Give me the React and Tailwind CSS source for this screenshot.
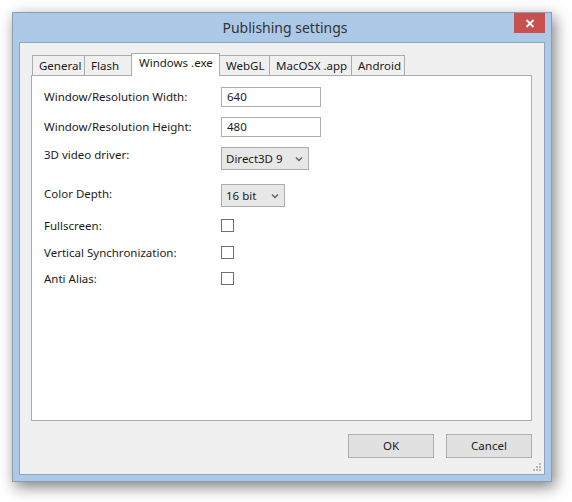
import React from "react";

const font = { fontFamily: '"Noto Sans", "Open Sans", sans-serif' };

function Chevron() {
  return (
    <svg width="8" height="6" viewBox="0 0 8 6" className="block">
      <path d="M1 1.5 L4 4.5 L7 1.5" fill="none" stroke="#606060" strokeWidth="1.4" />
    </svg>
  );
}

function Tab({ label, w, selected }) {
  if (selected) {
    return (
      <div
        className="relative z-10 -ml-px h-[23px] bg-white border border-b-0 border-[#acacac] pl-[7px] pt-[1px] text-[11.5px] leading-[16px] text-[#1a1a1a]"
        style={{ width: w }}
      >
        {label}
      </div>
    );
  }
  return (
    <div
      className="-ml-px first:ml-0 h-[21px] bg-[#f0f0f0] border border-b-0 border-[#acacac] pl-[6px] pt-[2px] text-[11.5px] leading-[16px] text-[#1a1a1a]"
      style={{ width: w }}
    >
      {label}
    </div>
  );
}

function Row({ label, children, h, mt, labelPt = 0, start }) {
  return (
    <div className={`flex ${start ? "items-start" : "items-center"}`} style={{ height: h, marginTop: mt }}>
      <div className="w-[177px] text-[11.5px] leading-[16px] text-[#1a1a1a]" style={{ paddingTop: labelPt }}>
        {label}
      </div>
      {children}
    </div>
  );
}

function TextBox({ value }) {
  return (
    <div className="w-[100px] h-[20px] bg-white border border-[#abadb3] pl-[5px] text-[11.5px] leading-[18px] text-[#1a1a1a]">
      {value}
    </div>
  );
}

function Select({ value, w }) {
  return (
    <div
      className="h-[23px] bg-[#e7e7e7] border border-[#acacac] pl-[4px] pr-[5px] flex items-center justify-between text-[11.5px] text-[#1a1a1a]"
      style={{ width: w }}
    >
      <span className="leading-[16px]">{value}</span>
      <Chevron />
    </div>
  );
}

function Check() {
  return <div className="w-[13px] h-[13px] bg-white border border-[#707070]" />;
}

function Button({ label }) {
  return (
    <div className="w-[86px] h-[24px] bg-[#e1e1e1] border border-[#adadad] flex items-center justify-center text-[11.5px] text-[#1a1a1a]">
      {label}
    </div>
  );
}

export default function App() {
  return (
    <div className="w-[572px] h-[502px] bg-white overflow-hidden pt-[12px] pl-[12px]" style={font}>
      <div className="w-[540px] h-[470px] border border-[#8d9db0] bg-[#adc9e8] flex flex-col shadow-[3px_5px_14px_rgba(0,0,0,0.5)]">
        {/* Title bar */}
        <div className="relative h-[29px] flex items-center justify-center">
          <span className="text-[14px] leading-[20px] text-[#333] pl-[6px]">Publishing settings</span>
          <div className="absolute right-[6px] top-0 w-[31px] h-[20px] bg-[#c75050] flex items-center justify-center">
            <svg width="10" height="9" viewBox="0 0 10 9">
              <path d="M1.5 1 L8.5 8 M8.5 1 L1.5 8" stroke="white" strokeWidth="1.8" />
            </svg>
          </div>
        </div>
        {/* Client */}
        <div className="relative mx-[6px] mb-[6px] flex-1 border border-[#8ea4be] bg-[#f0f0f0] flex flex-col pt-[10px] pl-[11px] pr-[12px]">
          <div className="flex items-end h-[23px] pl-[1px]">
            <Tab label="General" w={53} />
            <Tab label="Flash" w={48} />
            <Tab label="Windows .exe" w={89} selected />
            <Tab label="WebGL" w={51} />
            <Tab label="MacOSX .app" w={83} />
            <Tab label="Android" w={54} />
          </div>
          <div className="-mt-px h-[346px] bg-white border border-[#acacac] pl-[12px] pt-[11px] flex flex-col">
            <Row label="Window/Resolution Width:" h={20} mt={0}>
              <TextBox value="640" />
            </Row>
            <Row label="Window/Resolution Height:" h={20} mt={10}>
              <TextBox value="480" />
            </Row>
            <Row label="3D video driver:" h={23} mt={10} start labelPt={0}>
              <Select value="Direct3D 9" w={88} />
            </Row>
            <Row label="Color Depth:" h={23} mt={14} start labelPt={2}>
              <Select value="16 bit" w={64} />
            </Row>
            <Row label="Fullscreen:" h={13} mt={12}>
              <Check />
            </Row>
            <Row label="Vertical Synchronization:" h={13} mt={14}>
              <Check />
            </Row>
            <Row label="Anti Alias:" h={13} mt={13}>
              <Check />
            </Row>
          </div>
          <div className="flex justify-end gap-[12px] mt-[13px]">
            <Button label="OK" />
            <Button label="Cancel" />
          </div>
          <svg className="absolute right-[2px] bottom-[2px]" width="10" height="10" viewBox="0 0 10 10">
            <g fill="#b8b8b8">
              <rect x="7" y="1" width="2" height="2" />
              <rect x="4" y="4" width="2" height="2" />
              <rect x="7" y="4" width="2" height="2" />
              <rect x="1" y="7" width="2" height="2" />
              <rect x="4" y="7" width="2" height="2" />
              <rect x="7" y="7" width="2" height="2" />
            </g>
          </svg>
        </div>
      </div>
    </div>
  );
}
